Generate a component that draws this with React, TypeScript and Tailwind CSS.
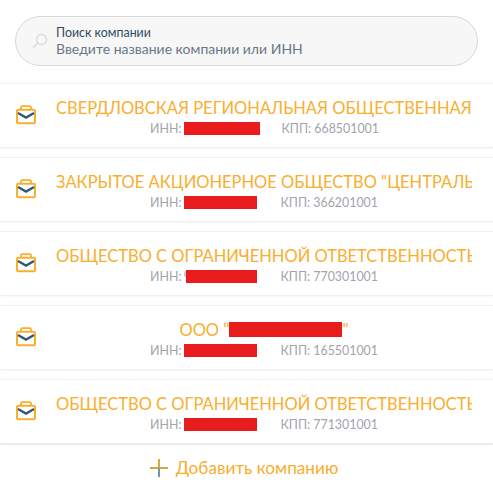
import React from "react";

function Briefcase() {
  return (
    <svg width="22" height="22" viewBox="0 0 22 22" fill="none" className="shrink-0">
      <path d="M6 5.5V3.4C6 2.7 6.5 2.2 7.2 2.2H14.8C15.5 2.2 16 2.7 16 3.4V5.5" stroke="#f9ae2e" strokeWidth="1.8" />
      <rect x="2" y="5.8" width="18" height="13.4" rx="1.2" fill="#fff" stroke="#f9ae2e" strokeWidth="2" />
      <path d="M3 9L11 13.6L19 9" stroke="#2f5a73" strokeWidth="2.3" />
    </svg>
  );
}

type Row = { name: string; center?: boolean; bar: string; gap: string; pre?: boolean; kpp: string };

const rows: Row[] = [
  { name: "СВЕРДЛОВСКАЯ РЕГИОНАЛЬНАЯ ОБЩЕСТВЕННАЯ ОРГАНИЗАЦИЯ", bar: "ml-[3px] w-[76px]", gap: "ml-[21px]", kpp: "668501001" },
  { name: 'ЗАКРЫТОЕ АКЦИОНЕРНОЕ ОБЩЕСТВО "ЦЕНТРАЛЬНОЕ', bar: "ml-[3px] w-[73px]", gap: "ml-[23px]", kpp: "366201001" },
  { name: "ОБЩЕСТВО С ОГРАНИЧЕННОЙ ОТВЕТСТВЕННОСТЬЮ", bar: "w-[71px]", gap: "ml-[23px]", pre: true, kpp: "770301001" },
  { name: "", center: true, bar: "ml-[3px] w-[73px]", gap: "ml-[23px]", kpp: "165501001" },
  { name: "ОБЩЕСТВО С ОГРАНИЧЕННОЙ ОТВЕТСТВЕННОСТЬЮ", bar: "ml-[3px] w-[73px]", gap: "ml-[23px]", kpp: "771301001" },
];

function CompanyRow({ row }: { row: Row }) {
  return (
    <div className="flex h-[65px] items-center border-y border-[#efefef] bg-white pl-[15px] pr-[21px] shadow-[0_1px_2px_rgba(0,0,0,0.04)]">
      <div className="mb-[2px] w-[41px] shrink-0">
        <Briefcase />
      </div>
      <div className="flex min-w-0 flex-1 flex-col items-center pt-[1px]">
        {row.center ? (
          <div className="flex h-[24px] w-full items-center justify-center text-[16.5px] leading-[24px] text-[#f9ae2e]">
            <span>ООО "</span>
            <span className="h-[15px] w-[113px] bg-[#e81c1c]" />
            <span>"</span>
          </div>
        ) : (
          <div className="h-[24px] w-full overflow-hidden whitespace-nowrap text-[16.5px] leading-[24px] text-[#f9ae2e]">
            {row.name}
          </div>
        )}
        <div className="mt-[1px] flex h-[16px] w-full items-center pl-[94px] text-[12.4px] leading-[16px] text-[#a3a3ad]">
          <span>ИНН:</span>
          {row.pre ? <span className="ml-[2px] w-[3px] overflow-hidden">9</span> : null}
          <span className={"h-[13px] bg-[#e81c1c] " + row.bar} />
          <span className={row.gap}>КПП: {row.kpp}</span>
        </div>
      </div>
    </div>
  );
}

export default function App() {
  return (
    <div className="h-[491px] w-[493px] overflow-hidden bg-white font-['Lato','Noto_Sans',sans-serif]">
      <div className="px-[15px] pb-[17px] pt-[16px]">
        <div className="flex h-[50px] items-center rounded-[25px] border border-[#d8d8d8] bg-[#f7f7f7] pl-[16px]">
          <svg width="16" height="16" viewBox="0 0 16 16" fill="none" className="shrink-0">
            <circle cx="9.5" cy="6.5" r="5" stroke="#dcdcdc" strokeWidth="1.4" />
            <path d="M5.8 10.2L1.2 14.6" stroke="#dcdcdc" strokeWidth="1.6" />
          </svg>
          <div className="ml-[8px] flex flex-col">
            <span className="text-[12.4px] leading-[14px] text-[#2f4a5e]">Поиск компании</span>
            <span className="text-[14px] leading-[17px] text-[#6b7684]">Введите название компании или ИНН</span>
          </div>
        </div>
      </div>
      <div className="flex flex-col gap-[9px]">
        {rows.map((r, i) => (
          <CompanyRow key={i} row={r} />
        ))}
      </div>
      <div className="flex h-[46px] items-center justify-center border-t border-[#efefef] pr-[5px]">
        <svg width="18" height="18" viewBox="0 0 18 18" className="mr-[8px]">
          <rect x="0" y="8" width="18" height="2" fill="#d9a640" />
          <rect x="8" y="0" width="2" height="9" fill="#d9a640" />
          <rect x="8" y="9" width="2" height="9" fill="#6f98a8" />
        </svg>
        <span className="text-[17.2px] text-[#f9ae2e]">Добавить компанию</span>
      </div>
    </div>
  );
}
